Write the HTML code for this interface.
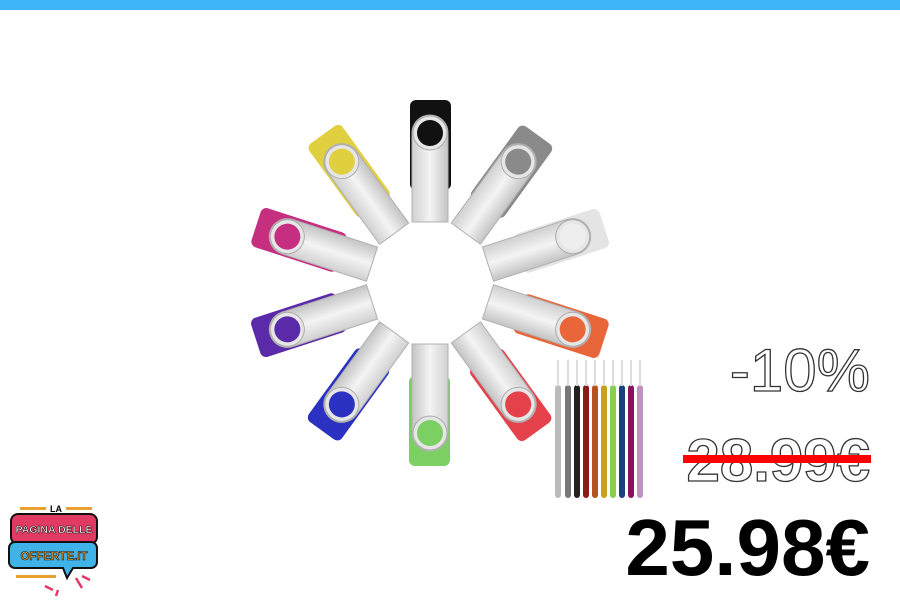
<!DOCTYPE html>
<html><head><meta charset="utf-8"><style>
body{margin:0;width:900px;height:600px;background:#fff;overflow:hidden;position:relative;font-family:"Liberation Sans",sans-serif}
.bar{position:absolute;left:0;top:0;width:900px;height:10px;background:#3db5f7}
.t{position:absolute;right:30px;font-weight:bold;text-align:right}
</style></head><body>
<div class="bar"></div>
<svg width="900" height="600" style="position:absolute;left:0;top:0">
<defs>
<linearGradient id="s" x1="0" x2="1"><stop offset="0" stop-color="#d0d0d0"/><stop offset=".5" stop-color="#f4f4f4"/><stop offset="1" stop-color="#c4c4c4"/></linearGradient>
<g id="sv"><path d="M-18 -61 V-150 A18 18 0 0 1 18 -150 V-61 Z" fill="url(#s)" stroke="#b0b0b0" stroke-width="1"/><circle cx="0" cy="-150" r="17" fill="#e6e6e6" stroke="#aaa"/></g>
</defs>
<g transform="translate(430,283)">
<g transform="rotate(0)"><rect x="-20" y="-183" width="41" height="90" rx="6" fill="#111"/><use href="#sv"/><circle cx="0" cy="-150" r="13" fill="#111"/></g>
<g transform="rotate(36)"><rect x="-20" y="-183" width="41" height="90" rx="6" fill="#8a8a8a"/><use href="#sv"/><circle cx="0" cy="-150" r="13" fill="#8a8a8a"/></g>
<g transform="rotate(72)"><rect x="-20" y="-183" width="41" height="90" rx="6" fill="#e4e4e4"/><use href="#sv"/><circle cx="0" cy="-150" r="13" fill="#eee"/></g>
<g transform="rotate(108)"><rect x="-20" y="-183" width="41" height="90" rx="6" fill="#e8663a"/><use href="#sv"/><circle cx="0" cy="-150" r="13" fill="#e8663a"/></g>
<g transform="rotate(144)"><rect x="-20" y="-183" width="41" height="90" rx="6" fill="#e5414a"/><use href="#sv"/><circle cx="0" cy="-150" r="13" fill="#e5414a"/></g>
<g transform="rotate(180)"><rect x="-20" y="-183" width="41" height="90" rx="6" fill="#7ccf62"/><use href="#sv"/><circle cx="0" cy="-150" r="13" fill="#7ccf62"/></g>
<g transform="rotate(216)"><rect x="-20" y="-183" width="41" height="90" rx="6" fill="#2b31c0"/><use href="#sv"/><circle cx="0" cy="-150" r="13" fill="#2b31c0"/></g>
<g transform="rotate(252)"><rect x="-20" y="-183" width="41" height="90" rx="6" fill="#5a2aa8"/><use href="#sv"/><circle cx="0" cy="-150" r="13" fill="#5a2aa8"/></g>
<g transform="rotate(288)"><rect x="-20" y="-183" width="41" height="90" rx="6" fill="#c62f80"/><use href="#sv"/><circle cx="0" cy="-150" r="13" fill="#c62f80"/></g>
<g transform="rotate(324)"><rect x="-20" y="-183" width="41" height="90" rx="6" fill="#e0d040"/><use href="#sv"/><circle cx="0" cy="-150" r="13" fill="#e0d040"/></g>
</g>
<g>
<rect x="555" y="385" width="6" height="113" rx="3" fill="#bbb"/>
<rect x="565" y="385" width="6" height="113" rx="3" fill="#777"/>
<rect x="574" y="385" width="6" height="113" rx="3" fill="#222"/>
<rect x="583" y="385" width="6" height="113" rx="3" fill="#8b1a1a"/>
<rect x="592" y="385" width="6" height="113" rx="3" fill="#b5521f"/>
<rect x="601" y="385" width="6" height="113" rx="3" fill="#c9a020"/>
<rect x="610" y="385" width="6" height="113" rx="3" fill="#86cf50"/>
<rect x="619" y="385" width="6" height="113" rx="3" fill="#1c3f80"/>
<rect x="628" y="385" width="6" height="113" rx="3" fill="#8b1060"/>
<rect x="637" y="385" width="6" height="113" rx="3" fill="#c090c0"/>
<g stroke="#ddd" stroke-width="2">
<line x1="558" y1="360" x2="558" y2="386"/><line x1="568" y1="360" x2="568" y2="386"/><line x1="577" y1="360" x2="577" y2="386"/><line x1="586" y1="360" x2="586" y2="386"/><line x1="595" y1="360" x2="595" y2="386"/><line x1="604" y1="360" x2="604" y2="386"/><line x1="613" y1="360" x2="613" y2="386"/><line x1="622" y1="360" x2="622" y2="386"/><line x1="631" y1="360" x2="631" y2="386"/><line x1="640" y1="360" x2="640" y2="386"/>
</g></g>
<g>
<rect x="20" y="507" width="26" height="3" fill="#e8a030"/><rect x="66" y="507" width="26" height="3" fill="#e8a030"/>
<text x="56" y="512" font-size="9" font-weight="bold" text-anchor="middle" font-family="Liberation Sans">LA</text>
<rect x="11" y="514" width="86" height="30" rx="7" fill="#e23b63" stroke="#111" stroke-width="2"/>
<text x="54" y="533" font-size="10.5" font-weight="bold" fill="#fff" text-anchor="middle" stroke="#111" stroke-width=".5" font-family="Liberation Sans">PAGINA DELLE</text>
<path d="M15 542 h76 a6 6 0 0 1 6 6 v14 a6 6 0 0 1 -6 6 h-18 l-6 10 l-4 -10 h-48 a6 6 0 0 1 -6 -6 v-14 a6 6 0 0 1 6 -6z" fill="#3fb2e8" stroke="#111" stroke-width="2"/>
<text x="54" y="560" font-size="11.5" font-weight="bold" fill="#f2a030" text-anchor="middle" stroke="#111" stroke-width=".6" font-family="Liberation Sans">OFFERTE.IT</text>
<rect x="16" y="575" width="40" height="3" fill="#e8a030"/>
<path d="M45 586 l8 4 M58 590 l-2 6 M76 578 l6 10 M82 576 l8 4" stroke="#e23b63" stroke-width="2.5"/>
</g>
</svg>
<div class="t" style="top:336px;font-size:60px;font-weight:normal;color:#fff;-webkit-text-stroke:1.3px #333">-10%</div>
<div class="t" style="top:426px;font-size:60px;color:#fff;-webkit-text-stroke:1.3px #333">28.99€</div>
<div style="position:absolute;left:683px;top:455px;width:188px;height:8px;background:#f00"></div>
<div class="t" style="top:502px;font-size:80px;color:#000">25.98€</div>
</body></html>
